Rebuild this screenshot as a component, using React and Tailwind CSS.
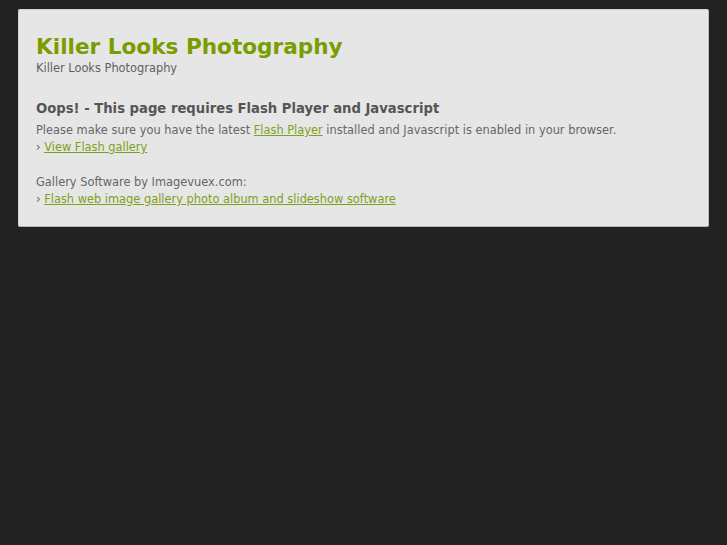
import React from "react";

export default function App() {
  return (
    <div className="min-h-screen w-full bg-[#222222] pt-[9px] px-[18px]" style={{ fontFamily: '"DejaVu Sans", Verdana, sans-serif' }}>
      <div className="w-[691px] bg-[#e6e6e6] border border-[#d0d0d0] border-b-[#b5b5b5] border-r-[#bdbdbd] rounded-[2px] px-[17px] pt-[22px] pb-[18px]">
        <h1 className="text-[21.6px] leading-[29px] font-bold text-[#7a9c00]">Killer Looks Photography</h1>
        <p className="text-[11.4px] leading-[15px] text-[#5f5f5f]">Killer Looks Photography</p>

        <h2 className="mt-[23px] text-[13.2px] leading-[20px] font-bold text-[#555555]">
          Oops! - This page requires Flash Player and Javascript
        </h2>
        <div className="mt-[3px] text-[11.4px] leading-[17px] text-[#666666]">
          <p>
            Please make sure you have the latest{" "}
            <a href="#" className="text-[#7fa11a] underline">Flash Player</a>{" "}
            installed and Javascript is enabled in your browser.
          </p>
          <p>
            › <a href="#" className="text-[#7fa11a] underline">View Flash gallery</a>
          </p>
          <p className="mt-[18px]">Gallery Software by Imagevuex.com:</p>
          <p>
            › <a href="#" className="text-[#7fa11a] underline">Flash web image gallery photo album and slideshow software</a>
          </p>
        </div>
      </div>
    </div>
  );
}
